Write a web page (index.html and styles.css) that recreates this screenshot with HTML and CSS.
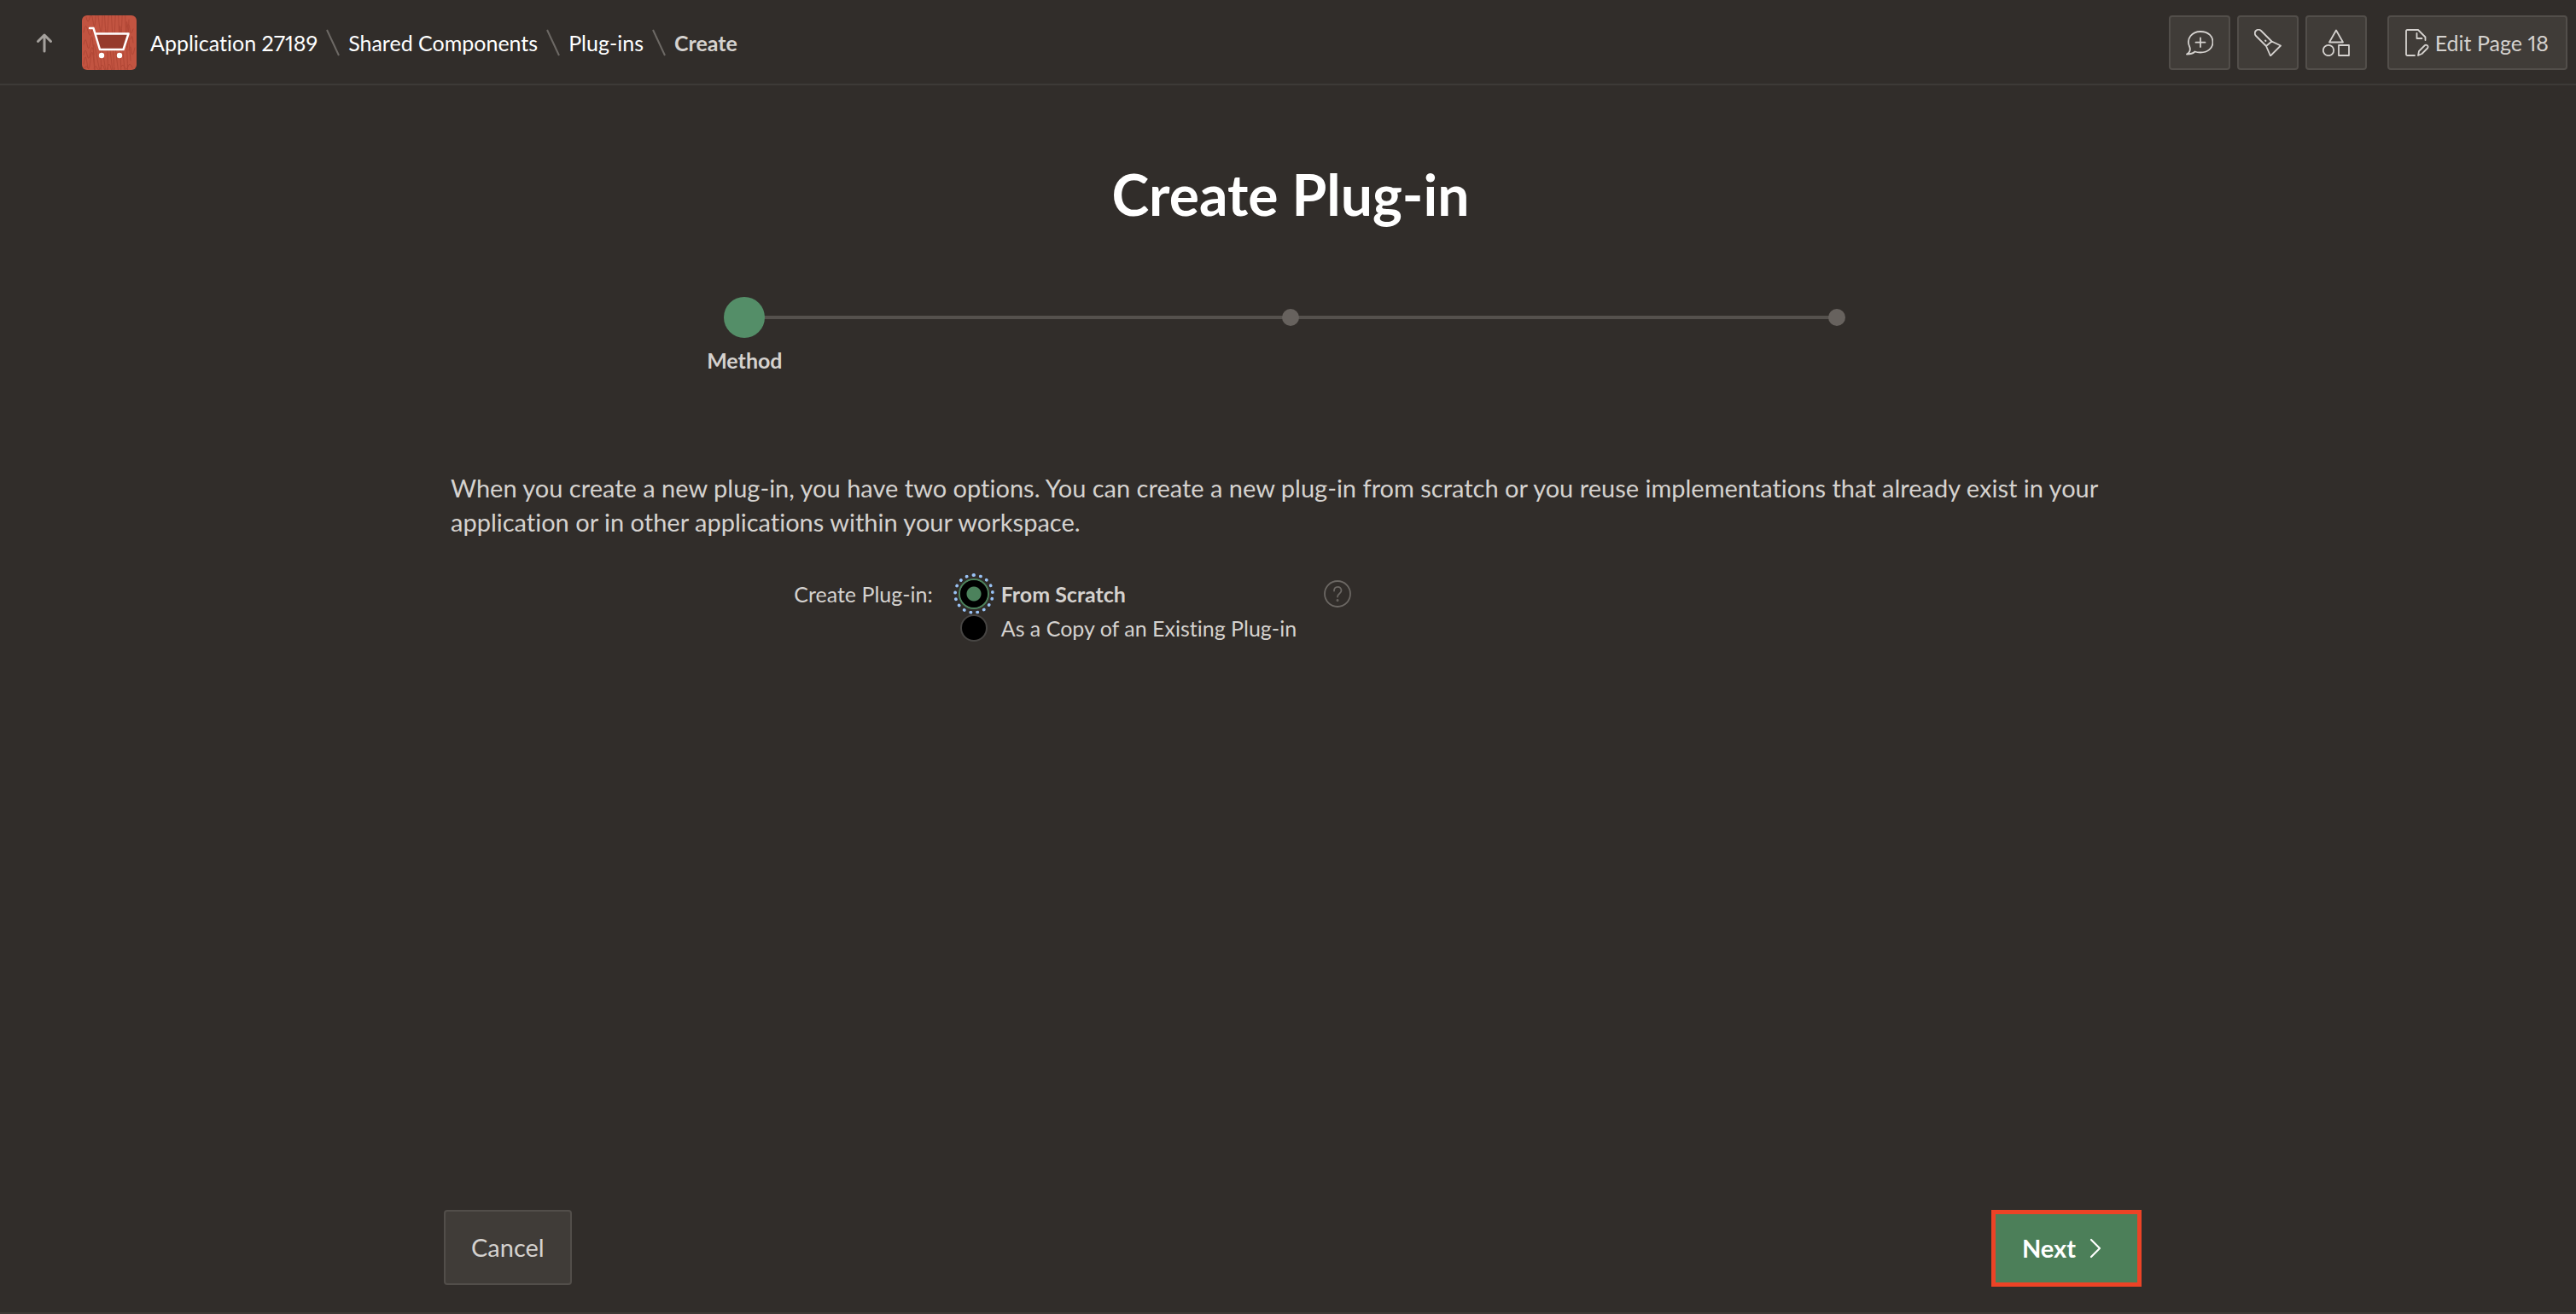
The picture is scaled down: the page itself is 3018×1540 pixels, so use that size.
FILE: index.html
```html
<!DOCTYPE html>
<html lang="en">
<head>
<meta charset="utf-8">
<title>Create Plug-in</title>
<link rel="stylesheet" href="styles.css">
</head>
<body>
<header class="topbar">
  <a class="up" href="#" aria-label="Up one level">
    <svg width="24" height="24" viewBox="0 0 24 24" fill="none" stroke="currentColor" stroke-width="3" stroke-linecap="round" stroke-linejoin="round"><path d="M12 22V3M4.500 10.500L12 3l7.500 7.500"/></svg>
  </a>
  <a class="app-icon" href="#" aria-label="Application home">
    <svg width="64" height="64" viewBox="0 0 64 64" fill="none">
      <g stroke="#b04736" stroke-width="1" stroke-linecap="round">
        <path d="M5 2q2 10 4 1t4 4 3-5 4 6 4-5 3 5 4-5 4 6 4-5 4 3 4-4 4 5 4-3"/>
        <path d="M2 20q2-14 5-2t5-2M52 14q3-8 4 2t4 0"/>
        <path d="M2 34q2-11 4 0t4-3 3 5M2 46q2-10 4 0t4-3 4 3"/>
        <path d="M57 28q2-9 3 4M55 41q2-9 3 1t4-4"/>
        <path d="M2 57q2-16 4-1t4-4 4 3-0-7 4 3 4-4 4 6 4-7 4 3 3-1 4 5 4-9 4 9 4-6 4 6"/>
        <path d="M3 62q2-5 4 0M14 62q2-5 4 0t4-1 4 1 4-1 4 1 4 0M46 60q2-4 4 1t4-1 5 1"/>
      </g>
      <path d="M17 22h37l-6 17H21z" fill="#963b2c"/>
      <path d="M9 15h4.500l7.500 25h27.500l6-18.500H16" stroke="#fff" stroke-width="2.500" stroke-linecap="round" stroke-linejoin="round"/>
      <circle cx="23" cy="47" r="3.200" fill="#fff"/><circle cx="44" cy="47" r="3.200" fill="#fff"/>
    </svg>
  </a>
  <nav aria-label="Breadcrumb">
    <ol class="crumbs">
      <li><a href="#">Application 27189</a><svg class="sep" width="16" height="32" viewBox="0 0 16 32"><path d="M1 1l14 30" stroke="#6d6965" stroke-width="2"/></svg></li>
      <li><a href="#">Shared Components</a><svg class="sep" width="16" height="32" viewBox="0 0 16 32"><path d="M1 1l14 30" stroke="#6d6965" stroke-width="2"/></svg></li>
      <li><a href="#">Plug-ins</a><svg class="sep" width="16" height="32" viewBox="0 0 16 32"><path d="M1 1l14 30" stroke="#6d6965" stroke-width="2"/></svg></li>
      <li class="current" aria-current="page">Create</li>
    </ol>
  </nav>
  <div class="tools">
    <button class="btn icon-btn" type="button" aria-label="Feedback">
      <svg width="32" height="32" viewBox="0 0 32 32" fill="none" stroke="currentColor" stroke-width="1.800" stroke-linecap="round" stroke-linejoin="round"><path d="M1 29.500c3.500-2 4.500-4.500 3.500-8C-.5 11 7.500 3 17 3s14.500 5.500 14.500 12.500S25.500 27.500 17 27.500c-2.500 0-4.500-.2-6.500-1-1.800 1.800-5 3-9.500 3zM17 10.500v10.500M11.500 15.700h11"/></svg>
    </button>
    <button class="btn icon-btn" type="button" aria-label="Search">
      <svg width="32" height="32" viewBox="0 0 32 32" fill="none" stroke="currentColor" stroke-width="1.800" stroke-linecap="round" stroke-linejoin="round"><path d="M14 20L2 8a4 4 0 0 1 6-6l12.500 12.500zM20.500 14.500L31 19.500 19 31.500l-5-11.500M13 13.500l.5.5"/></svg>
    </button>
    <button class="btn icon-btn" type="button" aria-label="Shared Components">
      <svg width="32" height="32" viewBox="0 0 32 32" fill="none" stroke="currentColor" stroke-width="1.800" stroke-linejoin="round"><path d="M16 1.500l8 14H8zM19 19h12v12H19z"/><circle cx="7" cy="25" r="6.200"/></svg>
    </button>
    <button class="btn edit-btn" type="button">
      <svg width="32" height="32" viewBox="0 0 32 32" fill="none" stroke="currentColor" stroke-width="1.800" stroke-linecap="round" stroke-linejoin="round"><path d="M14 31H5.500q-1.500 0-1.500-1.500v-27Q4 1 5.500 1H18l8.500 8.500V13M16.500 5v6h6M18 31l1-5 6.500-6.500c2-2 5.500.500 3.500 3l-6.500 6.500z"/></svg>
      Edit Page 18
    </button>
  </div>
</header>

<main class="wizard">
  <h1>Create Plug-in</h1>
  <ol class="steps">
    <li class="step active"><span class="label">Method</span></li>
    <li class="step"></li>
    <li class="step"></li>
  </ol>
  <form class="form">
    <p class="intro">When you create a new plug-in, you have two options. You can create a new plug-in from scratch or you reuse implementations that already exist in your application or in other applications within your workspace.</p>
    <div class="field">
      <span class="field-label" id="method-label">Create Plug-in:</span>
      <div class="options" role="radiogroup" aria-labelledby="method-label">
        <label class="option"><input type="radio" name="method" checked><span>From Scratch</span></label>
        <label class="option"><input type="radio" name="method"><span>As a Copy of an Existing Plug-in</span></label>
      </div>
      <button class="help" type="button" aria-label="Help">
        <svg width="32" height="32" viewBox="0 0 32 32" fill="none" stroke="currentColor" stroke-width="1.800" stroke-linecap="round"><circle cx="16" cy="16" r="15"/><path d="M12 12.500c0-6 8.500-6 8.500-.5 0 4-4.500 3.500-4.500 7.500"/><circle cx="16" cy="23.500" r=".6"/></svg>
      </button>
    </div>
  </form>
</main>

<footer class="actions">
  <button class="btn large" type="button">Cancel</button>
  <button class="btn large next" type="button">Next
    <svg width="14" height="24" viewBox="0 0 14 24" fill="none" stroke="currentColor" stroke-width="2.200" stroke-linecap="round" stroke-linejoin="round"><path d="M2 2l10 10L2 22"/></svg>
  </button>
</footer>
</body>
</html>
```
FILE: styles.css
```css
* {
  box-sizing: border-box;
}

body {
  margin: 0;
  min-height: 100vh;
  display: flex;
  flex-direction: column;
  background: #312d2a;
  color: #d5d2cf;
  font-family: Lato, "Open Sans", sans-serif;
  font-size: 25px;
  line-height: 40px;
  font-variant-ligatures: none;
  font-variant-numeric: proportional-nums;
  border-bottom: 2px solid #3d3935;
}

svg {
  display: block;
  flex: none;
}

/* Top bar */
.topbar {
  display: flex;
  align-items: center;
  height: 100px;
  padding: 2px 10px 0 40px;
  border-bottom: 2px solid #3d3a37;
}

.up {
  color: #a5a19d;
  margin-right: 32px;
}

.app-icon {
  background: #c25441;
  border-radius: 6px;
  overflow: hidden;
  margin-right: 16px;
}

.crumbs {
  display: flex;
  margin: 0;
  padding: 0;
  list-style: none;
}

.crumbs li {
  display: flex;
  align-items: center;
}

.crumbs a {
  color: #fff;
  text-decoration: none;
}

.crumbs .current {
  font-weight: 700;
}

.sep {
  margin: 0 10px;
}

.tools {
  display: flex;
  gap: 8px;
  margin-left: auto;
}

.btn {
  display: flex;
  align-items: center;
  justify-content: center;
  margin: 0;
  border: 2px solid #524e4a;
  border-radius: 4px;
  background: #403c38;
  color: #d5d2cf;
  font: inherit;
  font-variant-ligatures: none;
}

.icon-btn {
  width: 72px;
  height: 64px;
}

.edit-btn {
  height: 64px;
  margin-left: 16px;
  padding: 0 20px 0 16px;
  gap: 6px;
}

/* Wizard */
.wizard {
  flex: 1;
  padding-left: 6px;
}

h1 {
  margin: 86px 0 0;
  color: #fff;
  font-size: 66px;
  font-weight: 700;
  line-height: 84px;
  text-align: center;
}

.steps {
  display: flex;
  max-width: 1919px;
  margin: 78px auto 0;
  padding: 0;
  list-style: none;
}

.step {
  position: relative;
  flex: 1;
  display: flex;
  flex-direction: column;
  align-items: center;
  height: 94px;
}

.step::before {
  content: "";
  width: 20px;
  height: 20px;
  margin: 14px 0;
  border-radius: 50%;
  background: #67625e;
}

.step.active::before {
  width: 48px;
  height: 48px;
  margin: 0 0 6px;
  background: #548e68;
}

.step + .step::after {
  content: "";
  position: absolute;
  z-index: -1;
  top: 22px;
  right: 50%;
  width: 100%;
  height: 4px;
  background: #55514d;
}

.label {
  font-weight: 700;
}

.form {
  max-width: 1984px;
  margin: 0 auto;
  padding: 110px 8px 0;
}

.intro {
  margin: 0 0 44px;
  font-size: 29px;
}

.field {
  display: flex;
  align-items: flex-start;
}

.field-label {
  width: 29%;
  padding-right: 6px;
  text-align: right;
}

.options {
  padding-left: 26px;
}

.option {
  display: flex;
  align-items: center;
  gap: 16px;
}

.option input {
  appearance: none;
  width: 32px;
  height: 32px;
  margin: 0;
  border: 2px solid #474543;
  border-radius: 50%;
  background: #000;
}

.option input:checked {
  border: 0;
  background: radial-gradient(circle, #4c825c 8px, #000 9px);
  box-shadow: 0 0 0 2px #4c825c;
  outline: 4px dotted #99c2f5;
  outline-offset: 4px;
}

.option input:checked + span {
  font-weight: 700;
}

.help {
  margin: 4px 0 0 32px;
  padding: 0;
  border: 0;
  background: none;
  color: #6b6763;
}

/* Footer */
.actions {
  display: flex;
  justify-content: space-between;
  width: 100%;
  max-width: 2000px;
  margin: 0 auto;
  padding: 0 0 30px 11px;
}

.large {
  height: 88px;
  padding: 0 30px;
  font-size: 29px;
}

.next {
  height: 90px;
  padding: 0 42px 0 31px;
  gap: 16px;
  border: 5px solid #ec4326;
  border-radius: 0;
  background: #4c7f59;
  color: #fff;
  font-weight: 700;
}
```
